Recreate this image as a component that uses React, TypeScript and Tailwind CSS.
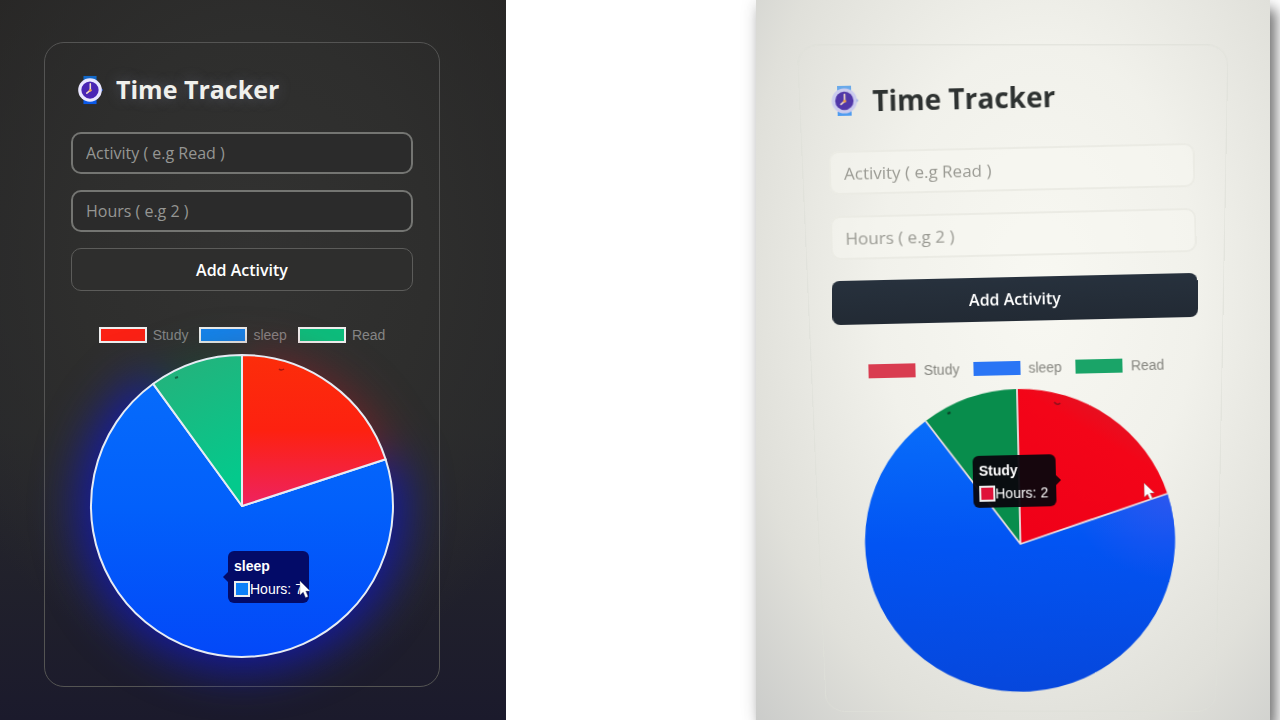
import { useId } from "react";

type Tone = "dark" | "light";

function WatchIcon({ tone }: { tone: Tone }) {
  const dark = tone === "dark";
  return (
    <svg viewBox="0 0 28 32" className={dark ? "h-[30px] w-7 shrink-0" : "h-8 w-7 shrink-0"} aria-hidden="true">
      <path d="M7 1h14v7H7z" fill={dark ? "#1268c8" : "#69a9ea"} />
      <path d="M7 24h14v7H7z" fill={dark ? "#0a59e8" : "#4f9cf0"} />
      <path d="M8 6l12 0 2 3H6zM6 23h16l-2 4H8z" fill={dark ? "#3f8dea" : "#9cbcf0"} />
      <path d="M25 13l3 3-3 3z" fill={dark ? "#2a62e0" : "#86a4e6"} />
      <circle cx="14" cy="16" r="12.6" fill={dark ? "#e9e6ff" : "#cbcbee"} />
      <circle cx="14" cy="16" r="9.2" fill={dark ? "#4a25b4" : "#5137a8"} />
      <path d="M14.3 9.5V16.3L10.6 19.4" fill="none" stroke="#f0d9c8" strokeWidth="1.7" strokeLinecap="round" />
      <circle cx="14.3" cy="16.3" r="1.5" fill="#f0a34a" />
    </svg>
  );
}

function Cursor({ className }: { className: string }) {
  return (
    <svg viewBox="0 0 12 19" className={`absolute h-[19px] w-3 ${className}`} aria-hidden="true">
      <path d="M1 1v14l3.2-3 2.4 5.6 2.4-1L6.7 11H11z" fill="#fff" stroke="#888" strokeWidth="0.4" />
    </svg>
  );
}

function TimeForm({ tone }: { tone: Tone }) {
  const id = useId();
  const dark = tone === "dark";
  const field = dark
    ? "h-[42px] border-2 border-[#747572] bg-[#2b2b2b] px-[13px] text-[16px] text-white placeholder:text-[#959693]"
    : "h-11 border-2 border-[#ebebe4] bg-[#f8f8f2]/50 px-[13px] text-[17px] text-[#333] placeholder:text-[#9a9a93]";
  return (
    <form
      className={`flex flex-col ${dark ? "gap-4" : "gap-[21px]"}`}
      onSubmit={(e) => e.preventDefault()}
    >
      <input id={`${id}-activity`} aria-label="Activity" type="text" placeholder="Activity ( e.g Read )" className={`w-full rounded-[10px] outline-none ${field}`} />
      <input id={`${id}-hours`} aria-label="Hours" type="text" inputMode="numeric" placeholder="Hours ( e.g 2 )" className={`w-full rounded-[10px] outline-none ${field}`} />
      <button
        type="submit"
        className={`w-full font-semibold text-white ${
          dark
            ? "h-[43px] rounded-[10px] border border-[#5c5c5a] bg-[#2e2e2d] text-[16px]"
            : "h-11 rounded-lg bg-linear-to-b from-[#27313d] to-[#222a34] text-[16px]"
        }`}
      >
        Add Activity
      </button>
    </form>
  );
}

function Legend({ tone }: { tone: Tone }) {
  const dark = tone === "dark";
  const items = dark
    ? [["Study", "bg-[#fb2114]"], ["sleep", "bg-[#1583ee]"], ["Read", "bg-[#0cbd7c]"]]
    : [["Study", "bg-[#d93c50]"], ["sleep", "bg-[#2a75f5]"], ["Read", "bg-[#1aa468]"]];
  return (
    <ul className={`flex items-center justify-center font-['Liberation_Sans',sans-serif] leading-4 ${dark ? "gap-[11px] text-[14px] text-[#858585]" : "gap-[14px] text-[14px] text-[#85857f]"}`}>
      {items.map(([name, color]) => (
        <li key={name} className={`flex items-center ${dark ? "gap-[6px]" : "gap-2"}`}>
          <span className={`${color} ${dark ? "h-4 w-12 border-2 border-[#eee]" : "h-[14px] w-[47px]"}`} />
          {name}
        </li>
      ))}
    </ul>
  );
}

function Tooltip({ title, value, tone }: { title: string; value: string; tone: Tone }) {
  const dark = tone === "dark";
  return (
    <div
      role="tooltip"
      className={`absolute flex h-[52px] flex-col justify-center gap-[7px] rounded-md px-[6px] font-['Liberation_Sans',sans-serif] text-[14px] leading-4 text-white ${
        dark ? "left-[138px] top-[197px] w-[81px] bg-[#030760]/95" : "left-[109px] top-[66px] w-[83px] bg-[#09060d]/95"
      }`}
    >
      <strong className="font-bold">{title}</strong>
      <span className="flex items-center whitespace-nowrap">
        <span className={`size-4 shrink-0 border-2 border-[#eee] ${dark ? "bg-[#0d80f8]" : "bg-[#df1239]"}`} />
        Hours: {value}
      </span>
      <span
        className={`absolute top-[21px] border-y-[5px] border-y-transparent ${
          dark ? "right-full border-r-[5px] border-r-[#030760]/95" : "left-full border-l-[5px] border-l-[#14040a]/95"
        }`}
      />
    </div>
  );
}

function DarkPie() {
  return (
    <div className="relative mx-auto w-[304px]">
      <svg viewBox="-152 -152 304 304" className="block w-full overflow-visible" role="img" aria-label="Study 2, sleep 7, Read 1">
        <defs>
          <filter id="halo" x="-60%" y="-60%" width="220%" height="220%" colorInterpolationFilters="sRGB"><feGaussianBlur stdDeviation="22" /></filter>
          <linearGradient id="dRed" x1="0" y1="0" x2="0" y2="1">
            <stop offset="0" stopColor="#fc2d0a" /><stop offset="0.5" stopColor="#fd2110" /><stop offset="1" stopColor="#ee2360" />
          </linearGradient>
          <linearGradient id="dGreen" x1="0" y1="0" x2="0.3" y2="1">
            <stop offset="0" stopColor="#27b07a" /><stop offset="1" stopColor="#04c98c" />
          </linearGradient>
          <linearGradient id="dBlue" x1="0" y1="0" x2="0" y2="1">
            <stop offset="0" stopColor="#066bfb" /><stop offset="0.45" stopColor="#0260fb" /><stop offset="1" stopColor="#0348f8" />
          </linearGradient>
        </defs>
        <g filter="url(#halo)">
          <path d="M0 0L157-50A165 165 0 1 1-97-133Z" fill="#1018b8" opacity="0.8" />
          <path d="M0 0V-150A156 156 0 0 1 150-48Z" fill="#9a1d28" opacity="0.6" />
          <path d="M0 0L-90-123A152 152 0 0 1 0-152Z" fill="#0c5a40" opacity="0.45" />
        </g>
        <g stroke="#e6ecf4" strokeWidth="2" strokeLinejoin="round">
          <path d="M0 0L143.6-46.7A151 151 0 1 1-88.8-122.2Z" fill="url(#dBlue)" />
          <path d="M0 0L-88.8-122.2A151 151 0 0 1 0-151Z" fill="url(#dGreen)" />
          <path d="M0 0V-151A151 151 0 0 1 143.6-46.7Z" fill="url(#dRed)" />
        </g>
        <path d="M37-137q2 2 5 0" fill="none" stroke="#a31510" strokeWidth="1.5" />
        <path d="M-67-128l3-1" stroke="#146a48" strokeWidth="2" />
      </svg>
      <Tooltip tone="dark" title="sleep" value="7" />
      <Cursor className="left-[209px] top-[226px]" />
    </div>
  );
}

function LightPie() {
  return (
    <div className="relative mx-auto w-[310px]">
      <svg viewBox="-155 -151 310 302" className="block w-full overflow-visible" role="img" aria-label="Study 2, sleep 7, Read 1">
        <defs>
          <linearGradient id="lRed" x1="0.2" y1="1" x2="0.8" y2="0">
            <stop offset="0" stopColor="#f00018" /><stop offset="0.65" stopColor="#f30518" /><stop offset="1" stopColor="#d3202c" />
          </linearGradient>
          <linearGradient id="lBlue" x1="0" y1="0" x2="0" y2="1">
            <stop offset="0" stopColor="#086dfa" /><stop offset="0.45" stopColor="#0254f3" /><stop offset="1" stopColor="#0647dc" />
          </linearGradient>
          <radialGradient id="lEdge" cx="1" cy="0.25" r="0.35">
            <stop offset="0" stopColor="#3155ee" /><stop offset="1" stopColor="#3155ee" stopOpacity="0" />
          </radialGradient>
        </defs>
        <path d="M0 4L148-43A155 151 0 1 1-92-121Z" fill="url(#lBlue)" />
        <path d="M0 4L148-43A155 151 0 1 1-92-121Z" fill="url(#lEdge)" />
        <path d="M0 4L-92-121A155 151 0 0 1 0-151Z" fill="#088d4c" />
        <path d="M0 4V-151A155 151 0 0 1 148-43Z" fill="url(#lRed)" />
        <path d="M-92-121L0 4L148-43M0 4V-151" fill="none" stroke="#eadfe0" strokeWidth="1.8" strokeLinejoin="round" />
        <path d="M37-137q3 4 6 1" fill="none" stroke="#8f101c" strokeWidth="1.5" />
        <path d="M-70-128l3-1" stroke="#0b3c25" strokeWidth="2" />
      </svg>
      <Tooltip tone="light" title="Study" value="2" />
      <Cursor className="left-[279px] top-[96px]" />
    </div>
  );
}

export default function App() {
  return (
    <main className="flex min-h-screen justify-between overflow-hidden bg-white pr-[10px] font-['Open_Sans','Noto_Sans',sans-serif]">
      <section className="flex w-[506px] flex-col items-center overflow-hidden bg-[radial-gradient(ellipse_70%_60%_at_50%_35%,#323231_0%,#2e2e2d_50%,transparent_100%),linear-gradient(to_bottom,#272625_0%,#27282b_60%,#1b1a2c_100%)] pt-[42px] pr-[22px] pb-8">
        <div className="w-full max-w-[396px] rounded-[20px] border border-[#545453] px-[26px] pt-[29px] pb-7">
          <h1 className="mb-6 flex h-9 items-center gap-3 pl-[5px] text-[25px] font-bold text-[#f0f0ec] [text-shadow:0_0_14px_#8a92b066]">
            <WatchIcon tone="dark" />
            Time Tracker
          </h1>
          <TimeForm tone="dark" />
          <div className="mt-9 mb-[11px]"><Legend tone="dark" /></div>
          <DarkPie />
        </div>
      </section>

      <section className="flex w-[514px] flex-col items-center bg-[radial-gradient(ellipse_at_55%_40%,#f8f8f2_0%,#f1f1eb_40%,#e0e0da_75%,#cbccca_100%)] pt-[79px] pl-2 shadow-[6px_10px_12px_#00000080,0_0_16px_#00000020]">
        <div className="relative w-full max-w-[366px]">
          <div className="absolute -inset-x-[22px] -top-8 -bottom-10 origin-[70%_50%] rounded-[20px] border border-[#dedfd8]/70 transform-[perspective(2000px)_rotateX(-17deg)]" />
          <div className="relative -rotate-[1.3deg] pb-3">
            <h1 className="mb-8 flex h-9 items-center gap-[14px] pl-[3px] text-[28px] font-bold text-[#2e3231]">
              <WatchIcon tone="light" />
              Time Tracker
            </h1>
            <TimeForm tone="light" />
            <div className="mt-[39px] mb-[13px]"><Legend tone="light" /></div>
            <LightPie />
          </div>
        </div>
      </section>
    </main>
  );
}
